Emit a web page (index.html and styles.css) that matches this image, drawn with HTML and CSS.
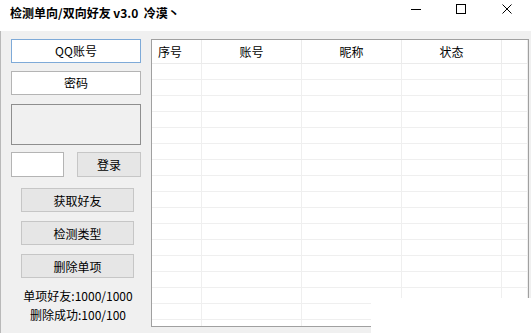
FILE: index.html
```html
<!DOCTYPE html>
<html lang="zh">
<head>
  <meta charset="UTF-8">
  <title>检测单向/双向好友 v3.0</title>
  <link rel="stylesheet" href="styles.css">
</head>
<body>
  <div class="window">
    <!-- Barre de titre -->
    <div class="titlebar">
      <span class="title">检测单向/双向好友 v3.0&nbsp;&nbsp;冷漠丶</span>
      <div class="controls">
        <svg class="ctl" width="46" height="20" viewBox="0 0 46 20"><line x1="18" y1="9.5" x2="28" y2="9.5" stroke="#000" stroke-width="1"/></svg>
        <svg class="ctl" width="46" height="20" viewBox="0 0 46 20"><rect x="17.5" y="4.5" width="9" height="9" fill="none" stroke="#000" stroke-width="1"/></svg>
        <svg class="ctl" width="46" height="20" viewBox="0 0 46 20"><path d="M17.5 4.5 L26.5 13.5 M26.5 4.5 L17.5 13.5" stroke="#000" stroke-width="1"/></svg>
      </div>
    </div>

    <div class="client">
      <!-- Colonne de gauche -->
      <div class="side">
        <div class="field focus">QQ账号</div>
        <div class="field">密码</div>
        <div class="panel"></div>
        <div class="login-row">
          <div class="small-input"></div>
          <button class="btn login">登录</button>
        </div>
        <button class="btn action first">获取好友</button>
        <button class="btn action">检测类型</button>
        <button class="btn action">删除单项</button>
        <div class="stats">
          <div>单项好友:1000/1000</div>
          <div>删除成功:100/100</div>
        </div>
      </div>

      <!-- Liste des amis -->
      <div class="listview">
        <div class="head">
          <div class="cell left">序号</div>
          <div class="cell">账号</div>
          <div class="cell">昵称</div>
          <div class="cell">状态</div>
          <div class="cell"></div>
        </div>
        <div class="rows" id="rows"></div>
      </div>
    </div>

    <!-- zone blanche en bas à droite -->
    <div class="blank"></div>
  </div>

  <script>
    // lignes vides de la liste
    const rows = document.getElementById('rows');
    for (let i = 0; i < 17; i++) {
      const r = document.createElement('div');
      r.className = 'row';
      for (let j = 0; j < 5; j++) {
        const c = document.createElement('div');
        c.className = 'cell';
        r.appendChild(c);
      }
      rows.appendChild(r);
    }
  </script>
</body>
</html>
```

FILE: styles.css
```css
/* Style de base */
body {
  margin: 0;
  background: #fff;
  font-family: "Noto Sans CJK SC", "Liberation Sans", sans-serif;
  font-size: 12px;
  color: #000;
}
.window {
  position: relative;
  width: 531px;
  height: 333px;
  overflow: hidden;
  background: #f0f0f0;
}
/* Barre de titre */
.titlebar {
  height: 31px;
  background: #fff;
  display: flex;
  align-items: flex-start;
  justify-content: space-between;
}
.title {
  font-weight: bold;
  font-size: 12px;
  line-height: 14px;
  padding: 6px 0 0 10px;
}
.controls {
  display: flex;
}
.ctl {
  display: block;
}
/* Zone client */
.client {
  display: flex;
  height: 302px;
  box-sizing: border-box;
  padding: 8px 2px 0 11px;
  border-left: 1px solid #b9b9b9;
}
.side {
  width: 130px;
  display: flex;
  flex-direction: column;
  margin-left: -1px;
}
.field {
  height: 24px;
  box-sizing: border-box;
  border: 1px solid #b4b4b4;
  background: #fff;
  text-align: center;
  line-height: 22px;
  margin-bottom: 8px;
}
.field.focus {
  border-color: #7eaad8;
}
.panel {
  height: 41px;
  box-sizing: border-box;
  border: 1px solid #8e8e8e;
  background: #f0f0f0;
  margin: 1px 0 7px;
}
.login-row {
  display: flex;
  justify-content: space-between;
  height: 25px;
}
.small-input {
  width: 53px;
  box-sizing: border-box;
  border: 1px solid #b4b4b4;
  background: #fff;
}
.btn {
  font-family: inherit;
  font-size: 12px;
  color: #000;
  box-sizing: border-box;
  border: 1px solid #c6c6c6;
  background: #e6e6e6;
  padding: 0;
}
.login {
  width: 64px;
  height: 25px;
}
.action {
  width: 113px;
  height: 24px;
  margin: 9px 0 0 10px;
}
.action.first {
  margin-top: 11px;
}
.stats {
  margin-top: 8px;
  text-align: center;
  line-height: 19px;
  padding-left: 4px;
}
/* Liste */
.listview {
  width: 378px;
  height: 288px;
  margin-left: 10px;
  box-sizing: border-box;
  border: 1px solid #a0a0a0;
  background: #fff;
  overflow: hidden;
}
.head, .row {
  display: grid;
  grid-template-columns: 50px 100px 100px 100px 1fr;
}
.head {
  height: 23px;
  border-bottom: 1px solid #ebebeb;
}
.head .cell {
  border-right: 1px solid #ebebeb;
  text-align: center;
  line-height: 23px;
}
.head .cell.left {
  text-align: left;
  padding-left: 6px;
}
.row {
  height: 16px;
  box-sizing: border-box;
  border-bottom: 1px solid #efefef;
}
.row .cell {
  border-right: 1px solid #efefef;
}
/* zone blanche posée par-dessus */
.blank {
  position: absolute;
  left: 371px;
  top: 298px;
  width: 160px;
  height: 35px;
  background: #fff;
}
```
